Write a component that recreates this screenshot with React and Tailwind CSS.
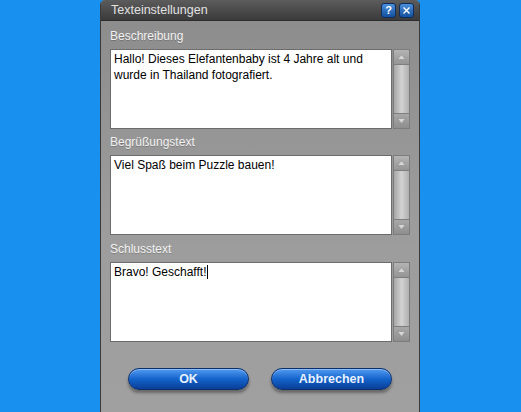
import React from 'react'

const font = { fontFamily: '"Liberation Sans", Arial, sans-serif' }

function Arrow({ down }) {
  return (
    <svg width="9" height="6" viewBox="0 0 9 6">
      <path
        d={down ? 'M0.5 0.5 H8.5 L4.5 5.5 Z' : 'M0.5 5.5 H8.5 L4.5 0.5 Z'}
        fill="#d6d6d6"
        stroke="#8a8a8a"
        strokeWidth="0.6"
      />
    </svg>
  )
}

function ScrollBar() {
  return (
    <div className="w-[17px] ml-px flex flex-col border border-[#7c7c7c] bg-[#9a9a9a]">
      <div className="h-[15px] flex items-center justify-center bg-gradient-to-b from-[#b4b4b4] to-[#959595] border-b border-[#7e7e7e]">
        <Arrow />
      </div>
      <div className="flex-1 bg-gradient-to-r from-[#a6a6a6] via-[#d2d2d2] to-[#b0b0b0]" />
      <div className="h-[15px] flex items-center justify-center bg-gradient-to-b from-[#a8a8a8] to-[#8e8e8e] border-t border-[#7e7e7e]">
        <Arrow down />
      </div>
    </div>
  )
}

function TextBox({ children }) {
  return (
    <div className="h-[80px] flex">
      <div className="flex-1 bg-white border border-[#6c6c6c] px-[3px] py-[1px] text-[12px] leading-[16px] text-black">
        {children}
      </div>
      <ScrollBar />
    </div>
  )
}

function Label({ h, children }) {
  return (
    <div
      className={'flex items-center text-[12px] text-[#f2f2f2] [text-shadow:0_1px_0_rgba(0,0,0,0.2)] ' + h}
    >
      {children}
    </div>
  )
}

function BlueButton({ children }) {
  return (
    <button className="w-[121px] h-[22px] rounded-full border border-[#0b2f6e] bg-gradient-to-b from-[#4f9bf0] via-[#1363cc] to-[#0a3f97] shadow-[0_3px_3px_rgba(0,0,0,0.35),inset_0_1px_0_rgba(255,255,255,0.35)] text-[12.5px] font-bold text-[#e8f1ff] leading-none">
      {children}
    </button>
  )
}

export default function App() {
  return (
    <div className="w-[521px] h-[412px] bg-[#1790f0] flex overflow-hidden" style={font}>
      <div className="ml-[100px] w-[320px] h-[412px] flex flex-col border-x border-[#3a3a3a] rounded-t-[5px] overflow-hidden bg-[#9c9c9c]">
        {/* title bar */}
        <div className="h-[21px] flex items-center pl-[10px] pr-[5px] bg-gradient-to-b from-[#5c5c5c] to-[#3b3b3b] border-b border-[#2c2c2c]">
          <span className="flex-1 text-[12.5px] text-[#e2e2e2]">Texteinstellungen</span>
          <div className="flex gap-[3px]">
            <div className="w-[15px] h-[15px] rounded-[3px] border border-[#0e2d5c] bg-gradient-to-b from-[#4a8fdc] to-[#13509e] flex items-center justify-center text-[11px] leading-none text-white font-bold">
              ?
            </div>
            <div className="w-[15px] h-[15px] rounded-[3px] border border-[#0e2d5c] bg-gradient-to-b from-[#4a8fdc] to-[#13509e] flex items-center justify-center">
              <svg width="9" height="9" viewBox="0 0 9 9">
                <path d="M1.5 1.5 L7.5 7.5 M7.5 1.5 L1.5 7.5" stroke="#ffffff" strokeWidth="1.4" />
              </svg>
            </div>
          </div>
        </div>

        {/* body */}
        <div className="flex-1 flex flex-col px-[9px] bg-gradient-to-b from-[#8d8d8d] via-[#9c9c9c] to-[#a0a0a0]">
          <Label h="h-[28px] pt-[2px]">Beschreibung</Label>
          <TextBox>
            Hallo! Dieses Elefantenbaby ist 4 Jahre alt und wurde in Thailand fotografiert.
          </TextBox>
          <Label h="h-[26px]">Begrüßungstext</Label>
          <TextBox>Viel Spaß beim Puzzle bauen!</TextBox>
          <Label h="h-[27px]">Schlusstext</Label>
          <TextBox>
            Bravo! Geschafft!
            <span className="inline-block w-px h-[14px] bg-black align-[-3px]" />
          </TextBox>

          <div className="mt-[26px] flex gap-[22px] pl-[18px]">
            <BlueButton>OK</BlueButton>
            <BlueButton>Abbrechen</BlueButton>
          </div>
        </div>
      </div>
    </div>
  )
}
